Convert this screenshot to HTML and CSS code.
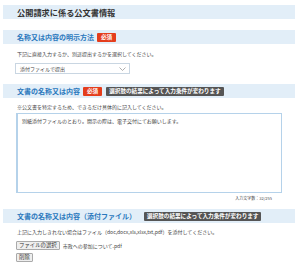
FILE: index.html
```html
<!doctype html>
<html lang="ja">
    <head>
        <meta charset="UTF-8" />
        <meta name="viewport" content="width=device-width, initial-scale=1.0" />
        <title>公開請求に係る公文書情報</title>
        <link rel="stylesheet" href="styles.css">
    </head>
    <body>
        <div class="page">
            <h1 class="title-bar">公開請求に係る公文書情報</h1>

            <section class="field">
                <h2 class="field-head">
                    名称又は内容の明示方法
                    <span class="badge required">必須</span>
                </h2>
                <p class="note">下記に直接入力するか、別途提出するかを選択してください。</p>
                <div class="select">
                    <span>添付ファイルで提出</span>
                    <svg width="7" height="4" viewBox="0 0 7 4">
                        <path d="M0.5 0.5 L3.5 3.5 L6.5 0.5" fill="none" stroke="#999" stroke-width="0.8" />
                    </svg>
                </div>
            </section>

            <section class="field">
                <h2 class="field-head">
                    文書の名称又は内容
                    <span class="badge required">必須</span>
                    <span class="badge cond">選択肢の結果によって入力条件が変わります</span>
                </h2>
                <p class="note">※公文書を特定するため、できるだけ具体的に記入してください。</p>
                <div class="textarea">別紙添付ファイルのとおり。開示の際は、電子交付にてお願いします。</div>
                <div class="counter">入力文字数：32/255</div>
            </section>

            <section class="field attach">
                <h2 class="field-head">
                    文書の名称又は内容（添付ファイル）
                    <span class="badge cond">選択肢の結果によって入力条件が変わります</span>
                </h2>
                <p class="note">上記に入力しきれない場合はファイル（doc,docx,xls,xlsx,txt,pdf）を添付してください。</p>
                <div class="file-row first">
                    <span class="btn">ファイルの選択</span>
                    <span class="file-name">市政への参加について.pdf</span>
                </div>
                <div class="file-row">
                    <span class="btn">削除</span>
                </div>
            </section>
        </div>
    </body>
</html>
```

FILE: styles.css
```css
body {
    margin: 0;
    padding: 0;
    background-color: #fff;
    color: #333;
    font-family: "Noto Sans CJK JP", "Noto Sans", sans-serif;
}

.page {
    padding: 5px 5px 0 3px;
}

.title-bar {
    margin: 0;
    height: 14px;
    line-height: 14px;
    padding-left: 14px;
    background-color: #e2eef8;
    font-size: 8.2px;
    font-weight: bold;
    color: #333;
}

.field {
    margin-top: 11px;
}

.field-head {
    margin: 0;
    height: 14px;
    padding-left: 14px;
    display: flex;
    align-items: center;
    gap: 3px;
    background-color: #e2eef8;
    font-size: 7px;
    font-weight: bold;
    color: #2a78bd;
}

.badge {
    display: inline-block;
    padding: 0 3px;
    height: 9px;
    line-height: 9px;
    font-size: 5.6px;
    font-weight: bold;
    color: #fff;
    border-radius: 1px;
}

.badge.required {
    background-color: #e43d1c;
    padding: 0 4px;
}

.badge.cond {
    background-color: #555;
    margin-left: 1px;
}

.field.attach .badge.cond {
    margin-left: 5px;
}

.note {
    margin: 6px 0 0 14px;
    font-size: 5px;
    line-height: 8px;
    color: #444;
}

.select {
    margin: 5px 0 0 12px;
    width: 106px;
    height: 9px;
    padding: 0 3px 0 4px;
    border: 1px solid #c9d6e2;
    display: flex;
    align-items: center;
    justify-content: space-between;
    font-size: 5px;
    color: #444;
}

.field + .field {
    margin-top: 10px;
}

.field + .field .note {
    margin-top: 5px;
}

.textarea {
    margin: 2px 13px 0 13px;
    height: 72px;
    padding: 3px 4px;
    border: 1px solid #b5d2ea;
    border-left-width: 2px;
    font-size: 5px;
    line-height: 8px;
    color: #444;
}

.counter {
    margin-top: 2px;
    padding-right: 23px;
    text-align: right;
    font-size: 4px;
    line-height: 6px;
    color: #444;
}

.field.attach {
    margin-top: 8px;
}

.file-row {
    margin: 3px 0 0 13px;
    display: flex;
    align-items: center;
    gap: 3px;
    font-size: 5px;
    color: #444;
}

.file-row.first {
    margin-top: 5px;
}

.btn {
    display: inline-block;
    padding: 0 2px;
    height: 7px;
    line-height: 7px;
    font-size: 5.4px;
    background-color: #eee;
    border: 1px solid #aaa;
    border-radius: 1px;
    color: #333;
}
```
